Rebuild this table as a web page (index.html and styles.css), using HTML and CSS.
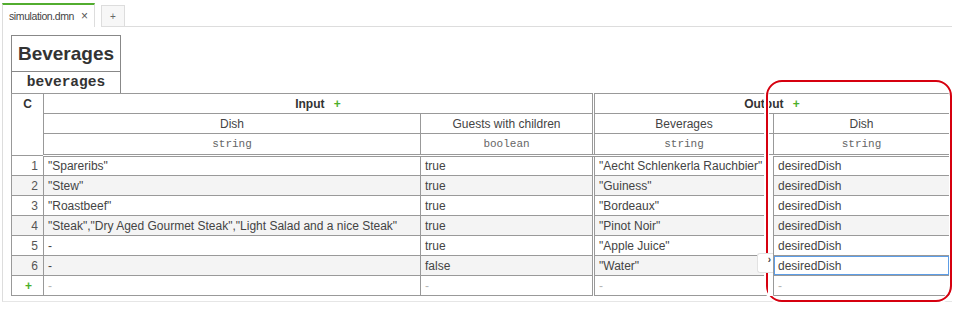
FILE: index.html
```html
<!DOCTYPE html>
<html>
<head>
<meta charset="utf-8">
<link rel="stylesheet" href="styles.css">
</head>
<body>
<div class="tabbar">
  <div class="tab active"><span class="tab-name">simulation.dmn</span><span class="tab-close">×</span></div>
  <div class="tab add">+</div>
  <div class="tab-rest"></div>
</div>
<div class="panel">
  <div class="title-box">
    <div class="title-name">Beverages</div>
    <div class="title-id">beverages</div>
  </div>
  <table class="dt">
    <colgroup>
      <col class="c-hit">
      <col class="c-dish">
      <col class="c-guests">
      <col class="c-bev">
      <col class="c-out">
    </colgroup>
    <thead>
      <tr class="h1">
        <th rowspan="3" class="hit">C</th>
        <th colspan="2" class="clause">Input <span class="plus">+</span></th>
        <th colspan="2" class="clause out-start">Output <span class="plus">+</span></th>
      </tr>
      <tr class="h2">
        <th>Dish</th>
        <th>Guests with children</th>
        <th class="out-start">Beverages</th>
        <th>Dish</th>
      </tr>
      <tr class="h3">
        <th class="type">string</th>
        <th class="type">boolean</th>
        <th class="type out-start">string</th>
        <th class="type">string</th>
      </tr>
    </thead>
    <tbody>
      <tr><td class="num">1</td><td>"Spareribs"</td><td>true</td><td class="out-start">"Aecht Schlenkerla Rauchbier"</td><td>desiredDish</td></tr>
      <tr><td class="num">2</td><td>"Stew"</td><td>true</td><td class="out-start">"Guiness"</td><td>desiredDish</td></tr>
      <tr><td class="num">3</td><td>"Roastbeef"</td><td>true</td><td class="out-start">"Bordeaux"</td><td>desiredDish</td></tr>
      <tr><td class="num">4</td><td>"Steak","Dry Aged Gourmet Steak","Light Salad and a nice Steak"</td><td>true</td><td class="out-start">"Pinot Noir"</td><td>desiredDish</td></tr>
      <tr><td class="num">5</td><td>-</td><td>true</td><td class="out-start">"Apple Juice"</td><td>desiredDish</td></tr>
      <tr><td class="num">6</td><td>-</td><td>false</td><td class="out-start">"Water"</td><td class="selected"><span class="handle">›</span>desiredDish</td></tr>
      <tr class="add-row"><td class="num add">+</td><td class="empty">-</td><td class="empty">-</td><td class="empty out-start">-</td><td class="empty">-</td></tr>
    </tbody>
  </table>
</div>
<div class="annotation"></div>
</body>
</html>
```

FILE: styles.css
```css
html, body {
  margin: 0;
  padding: 0;
  background: #ffffff;
}

body {
  font-family: "Liberation Sans", Arial, sans-serif;
  font-size: 12px;
  color: #333333;
  width: 960px;
  height: 310px;
  overflow: hidden;
}

.tabbar {
  display: flex;
  align-items: flex-end;
  padding: 3px 0 0 2px;
  height: 24px;
}

.tab {
  box-sizing: border-box;
  border: 1px solid #dddddd;
  border-bottom: none;
  color: #444444;
  display: flex;
  align-items: center;
}

.tab.active {
  width: 93px;
  height: 24px;
  border-top: 2px solid #52ad2f;
  padding: 0 0 1px 6px;
  background: #ffffff;
  white-space: nowrap;
}

.tab-name {
  font-size: 10.5px;
  letter-spacing: -0.4px;
}

.tab-close {
  margin-left: 7px;
  font-size: 12px;
  color: #555555;
}

.tab.add {
  width: 24px;
  height: 22px;
  margin-left: 6px;
  justify-content: center;
  background: #f7f7f7;
  border-bottom: 1px solid #dddddd;
  color: #666666;
  font-size: 10px;
}

.tab-rest {
  flex: 0 0 827px;
  border-bottom: 1px solid #dddddd;
  height: 0;
}

.panel {
  margin-left: 2px;
  width: 950px;
  height: 275px;
  box-sizing: border-box;
  border-left: 1px solid #dddddd;
  border-bottom: 1px solid #e6e6e6;
  padding: 8px 0 0 8px;
}

.title-box {
  width: 110px;
  box-sizing: border-box;
  border: 1px solid #888888;
  border-bottom: none;
  text-align: center;
}

.title-name {
  height: 35px;
  line-height: 36px;
  font-size: 19px;
  font-weight: bold;
  color: #333333;
}

.title-id {
  border-top: 1px solid #888888;
  height: 21px;
  line-height: 21px;
  font-family: "Liberation Mono", "Courier New", monospace;
  font-weight: bold;
  font-size: 14.5px;
  color: #333333;
}

.dt {
  border-collapse: collapse;
  table-layout: fixed;
  width: 938px;
}

.c-hit { width: 32px; }
.c-dish { width: 377px; }
.c-guests { width: 173px; }
.c-bev { width: 180px; }
.c-out { width: 176px; }

.dt th, .dt td {
  border: 1px solid #999999;
  padding: 0 4px;
  height: 20px;
  white-space: nowrap;
  overflow: hidden;
  box-sizing: border-box;
}

.dt tr.h3 th {
  height: 22px;
  padding-bottom: 1px;
}

.dt th {
  font-weight: normal;
  color: #444444;
  text-align: center;
}

.dt th.hit {
  vertical-align: top;
  font-weight: bold;
  padding-top: 3px;
  color: #333333;
}

.dt th.clause {
  font-weight: bold;
  color: #333333;
}

.plus {
  color: #4caf2a;
  font-weight: bold;
  margin-left: 6px;
}

.dt th.type {
  font-family: "Liberation Mono", "Courier New", monospace;
  font-size: 11px;
  color: #666666;
}

.dt .out-start {
  border-left: 3px double #999999;
}

.dt thead tr.h3 th {
  border-bottom: 3px double #999999;
}

.dt td {
  color: #444444;
  text-align: left;
}

.dt td.num {
  text-align: right;
  padding-right: 5px;
  color: #555555;
}

.dt tbody tr:nth-child(even) td {
  background: #f4f4f4;
}

.dt td.add {
  color: #4caf2a;
  font-weight: bold;
  text-align: center;
  padding: 0 0 0 2px;
}

.dt td.empty {
  color: #b5b5b5;
}

.dt td.selected {
  position: relative;
  overflow: visible;
  box-shadow: inset 0 0 0 1px #5d9de6;
  background: #ffffff !important;
}

.handle {
  position: absolute;
  z-index: 2;
  left: -17px;
  top: -3px;
  width: 16px;
  height: 20px;
  box-sizing: border-box;
  border: 1px solid #e2e2e2;
  border-right: none;
  border-radius: 3px 0 0 3px;
  background: #ffffff;
  font-size: 10px;
  font-weight: bold;
  line-height: 12px;
  text-align: right;
  padding-right: 2px;
  color: #444444;
}

.annotation {
  position: absolute;
  z-index: 1;
  left: 766px;
  top: 80px;
  width: 186px;
  height: 222px;
  box-sizing: border-box;
  border: 2px solid #d6000f;
  border-radius: 16px;
  box-shadow: 0 0 0 2px #ffffff, inset 0 0 0 1px #ffffff;
  pointer-events: none;
}

.annotation::before {
  content: "";
  position: absolute;
  left: 0;
  top: 73px;
  width: 5px;
  height: 141px;
  background: #ffffff;
}
```
